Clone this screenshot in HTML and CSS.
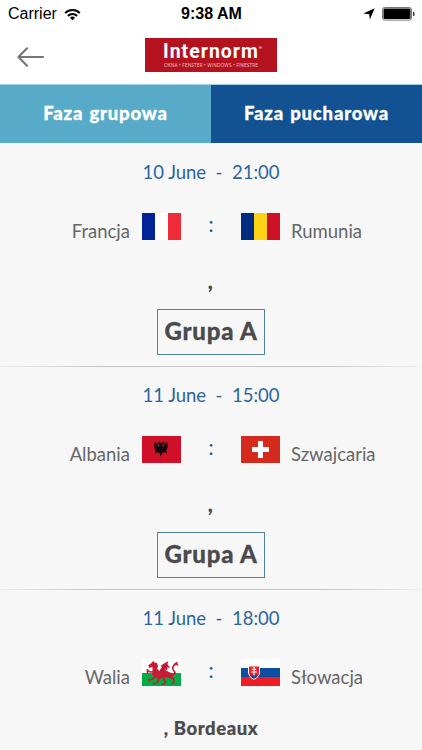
FILE: index.html
```html
<!DOCTYPE html>
<html lang="pl">
  <head>
    <meta charset="UTF-8">
    <meta name="viewport" content="width=device-width, initial-scale=1">
    <title>Internorm - Faza grupowa</title>
    <link rel="stylesheet" href="styles.css">
  </head>
  <body>
    <div class="status-bar">
      <div class="status-left">
        <span class="carrier">Carrier</span>
        <svg class="wifi" width="17" height="13" viewBox="0 0 17 13" fill="none" stroke="#000" stroke-width="2">
          <path d="M1.2 5.1a10.3 10.3 0 0 1 14.6 0M3.9 8a6.5 6.5 0 0 1 9.2 0"/>
          <path d="M8.5 12.2 5.9 9.8a3.8 3.8 0 0 1 5.2 0z" fill="#000" stroke="none"/>
        </svg>
      </div>
      <span class="clock">9:38 AM</span>
      <div class="status-right">
        <svg width="12" height="12" viewBox="0 0 12 12"><path d="M11.7.3 6.9 11.6 6.2 6.2.3 5.4z"/></svg>
        <svg width="33" height="14" viewBox="0 0 33 14">
          <rect x=".5" y=".5" width="29" height="12.6" rx="2" fill="#fff" stroke="#777"/>
          <rect x="1.5" y="1.6" width="27" height="10.4" rx="1"/>
          <path d="M31 4.5c2.2.8 2.2 4 0 4.8z" fill="#333"/>
        </svg>
      </div>
    </div>

    <header class="header">
      <a class="back" href="#" aria-label="Wstecz">
        <svg width="28" height="20" viewBox="0 0 28 20" fill="none" stroke="#777" stroke-width="2.2" stroke-linecap="round" stroke-linejoin="round">
          <path d="M26 10H2M10 1.3 1.5 10l8.500 8.700"/>
        </svg>
      </a>
      <div class="logo">
        <div class="logo-name">Internorm<sup>®</sup></div>
        <div class="logo-tag">OKNA • FENSTER • WINDOWS • FINESTRE</div>
      </div>
    </header>

    <nav class="tabs">
      <a class="tab active" href="#">Faza grupowa</a>
      <a class="tab" href="#">Faza pucharowa</a>
    </nav>

    <main class="matches">
      <section class="match">
        <div class="date">10 June&nbsp; -&nbsp; 21:00</div>
        <div class="teams">
          <span class="team home">Francja</span>
          <svg class="flag" viewBox="0 0 39 27">
            <rect width="39" height="27" fill="#fff"/>
            <rect width="13" height="27" fill="#002395"/>
            <rect x="26" width="13" height="27" fill="#ef2b3a"/>
          </svg>
          <span class="score">:</span>
          <svg class="flag" viewBox="0 0 39 27">
            <rect width="39" height="27" fill="#fcd116"/>
            <rect width="13" height="27" fill="#002b7f"/>
            <rect x="26" width="13" height="27" fill="#ce1126"/>
          </svg>
          <span class="team">Rumunia</span>
        </div>
        <div class="place">,</div>
        <div class="group">Grupa A</div>
      </section>

      <section class="match">
        <div class="date">11 June&nbsp; -&nbsp; 15:00</div>
        <div class="teams">
          <span class="team home">Albania</span>
          <svg class="flag" viewBox="0 0 39 27">
            <rect width="39" height="27" fill="#d01028"/>
            <path fill="#16080b" d="M19.5 7.500 17.800 5.800 15 6l1.500 1-1 1 2 1v1.500l-1.700-.5-.8-2.500-2.700-1.500.5 2-.8-.3.5 2-.7.1.8 1.300-.7.4 1 1-.6.700 1.300.4-.8 1.200 1.500-.3-1.600 2 .8 1 1.800-1.800.6 1.600 1.300-1 1.700 4.500 1.700-4.500 1.300 1 .6-1.600 1.800 1.800.8-1-1.600-2 1.500.3-.8-1.200 1.300-.4-.6-.7 1-1-.7-.4.8-1.300-.7-.1.5-2-.8.3.5-2-2.700 1.500-.8 2.500-1.700.5V9l2-1-1-1L24 6l-2.800-.2z"/>
          </svg>
          <span class="score">:</span>
          <svg class="flag" viewBox="0 0 39 27">
            <rect width="39" height="27" fill="#d52b1e"/>
            <path fill="#fff" d="M17 5h5v6h6v5h-6v6h-5v-6h-6v-5h6z"/>
          </svg>
          <span class="team">Szwajcaria</span>
        </div>
        <div class="place">,</div>
        <div class="group">Grupa A</div>
      </section>

      <section class="match">
        <div class="date">11 June&nbsp; -&nbsp; 18:00</div>
        <div class="teams">
          <span class="team home">Walia</span>
          <svg class="flag" viewBox="0 0 39 27">
            <rect width="39" height="14" fill="#fff"/>
            <rect y="14" width="39" height="13" fill="#00ae45"/>
            <!-- head, neck and body -->
            <path fill="#c81b35" d="M6.500 6 9 4.500 11 2l1.500 1.500L15 4l1 3-.8 3 2.300 2 5.500-1 6 3 2 3-1 3-4-1.500-4-.5-4 2-5-1-3-3.500.5-3L10.500 8 7 9z"/>
            <!-- wing -->
            <path fill="#c81b35" d="M17 12.500 20 8l-1.500-1L22 4.500 26.500 2 25.500 5 28 9l-3-.5.5 3-2.500-1-1.500 3z"/>
            <!-- legs, tail -->
            <g fill="none" stroke="#c81b35" stroke-width="1.700">
              <path d="M13 12.500 8.500 13 5 11.500M5.500 10v5M14 17l-4 3.500-3.500.5M7 19.500v3M17 18l-.5 3.500-3 3h-3M27 17l4.500 3 .5 3-2 2M23 18l-1.500 2.500 2 2-1 2.500h-3"/>
              <path d="M29 15c3.500 1.500 5-1 3-3s-2-5 2-7"/>
            </g>
            <path fill="#c81b35" d="M31 5.500 35 2.500 36.500 7 34 6z"/>
            <path d="M18.500 11.500 22 6m-2 6 3.500-5" fill="none" stroke="#861527" stroke-width=".6"/>
          </svg>
          <span class="score">:</span>
          <svg class="flag" viewBox="0 0 39 27">
            <rect width="39" height="9" fill="#fff"/>
            <rect y="9" width="39" height="9" fill="#0b4ea2"/>
            <rect y="18" width="39" height="9" fill="#ee1c25"/>
            <path d="M7.500 7h11v6c0 4-2.500 6-5.500 7.300C10 19 7.500 17 7.500 13z" fill="#ee1c25" stroke="#fff"/>
            <path d="M9.500 17c1-1.700 1.800-1 2.300-.8.600-1.500 1.800-1.500 2.400 0 .5-.2 1.300-.9 2.300.8-1 1.300-2.500 2.200-3.500 2.600-1-.4-2.500-1.300-3.500-2.600z" fill="#0b4ea2"/>
            <path d="M13 8v8.500M10.800 10.300h4.400M10 13h6" stroke="#fff" stroke-width="1.200"/>
          </svg>
          <span class="team">Słowacja</span>
        </div>
        <div class="place named">, Bordeaux</div>
      </section>
    </main>
  </body>
</html>
```
FILE: styles.css
```css
* {
  box-sizing: border-box;
}
body {
  margin: 0;
  background: #fff;
  font-family: Lato, "Open Sans", sans-serif;
  color: #4a4a4c;
}
a {
  color: inherit;
  text-decoration: none;
}
svg {
  display: block;
}

.status-bar {
  display: grid;
  grid-template-columns: 1fr auto 1fr;
  align-items: center;
  height: 28px;
  padding: 0 7px 0 8px;
  font-family: "Liberation Sans", Arial, sans-serif;
  font-size: 16px;
  color: #000;
}
.status-left,
.status-right {
  display: flex;
  align-items: center;
  gap: 7px;
}
.status-right {
  justify-content: flex-end;
}
.clock {
  font-weight: bold;
}

.header {
  display: grid;
  grid-template-columns: 1fr 132px 1fr;
  align-items: center;
  height: 57px;
  padding: 0 0 2px;
  border-bottom: 1px solid #9fcfe2;
}
.back {
  padding-left: 17px;
  padding-top: 3px;
}
.logo {
  height: 34px;
  padding-top: 4px;
  background: #b5121f;
  color: #fff;
  text-align: center;
  white-space: nowrap;
}
.logo-name {
  height: 20px;
  padding-left: 3px;
  font-family: Roboto, sans-serif;
  font-size: 19.5px;
  font-weight: bold;
  line-height: 20px;
  letter-spacing: 1px;
}
.logo-name sup {
  font-size: 4px;
  line-height: 0;
  letter-spacing: 0;
  vertical-align: 9px;
}
.logo-tag {
  font-family: "Open Sans", sans-serif;
  font-size: 4.8px;
  line-height: 6px;
  letter-spacing: .1px;
  color: #f3c6c9;
}

.tabs {
  display: grid;
  grid-template-columns: 1fr 1fr;
  height: 58px;
}
.tab {
  display: flex;
  align-items: center;
  justify-content: center;
  padding-bottom: 2px;
  background: #125293;
  color: #fff;
  font-size: 18.5px;
  font-weight: 900;
  letter-spacing: .8px;
  word-spacing: 1px;
  -webkit-text-stroke: .3px;
}
.tab.active {
  background: #58abc8;
}

.matches {
  background: #f7f7f7;
}
.match {
  display: flex;
  flex-direction: column;
  align-items: center;
  height: 223px;
  padding-top: 17px;
}
.match + .match {
  padding-top: 16px;
  border-top: 1px solid;
  border-image: linear-gradient(to right, #eee, #c4c4c4 25%, #c4c4c4 75%, #eee) 1;
}
.match:last-child {
  height: 161px;
}
.date {
  height: 24px;
  line-height: 24px;
  font-size: 18.5px;
  color: #2c659e;
  white-space: pre;
}
.teams {
  display: grid;
  grid-template-columns: 130px 39px 36px 39px 130px;
  column-gap: 12px;
  align-items: start;
  width: 422px;
  margin-top: 29px;
}
.team {
  padding-top: 5px;
  font-size: 18.5px;
  line-height: 26px;
  color: #666668;
  margin-left: -1px;
}
.home {
  margin-left: 0;
  text-align: right;
}
.flag {
  width: 39px;
  height: 27px;
}
.score {
  font-size: 22px;
  line-height: 22px;
  text-align: center;
  color: #1c64a8;
}
.place {
  height: 24px;
  margin-top: 25px;
  font-size: 22px;
  font-weight: 900;
  font-style: italic;
  line-height: 24px;
}
.place.named {
  margin-top: 26px;
  font-size: 18.5px;
  font-style: normal;
  letter-spacing: .6px;
  -webkit-text-stroke: .2px;
}
.group {
  width: 108px;
  height: 46px;
  margin-top: 16px;
  border: 1px solid #52819c;
  font-size: 24px;
  font-weight: 900;
  letter-spacing: .8px;
  line-height: 42px;
  text-align: center;
  white-space: nowrap;
  -webkit-text-stroke: .3px;
}
```
